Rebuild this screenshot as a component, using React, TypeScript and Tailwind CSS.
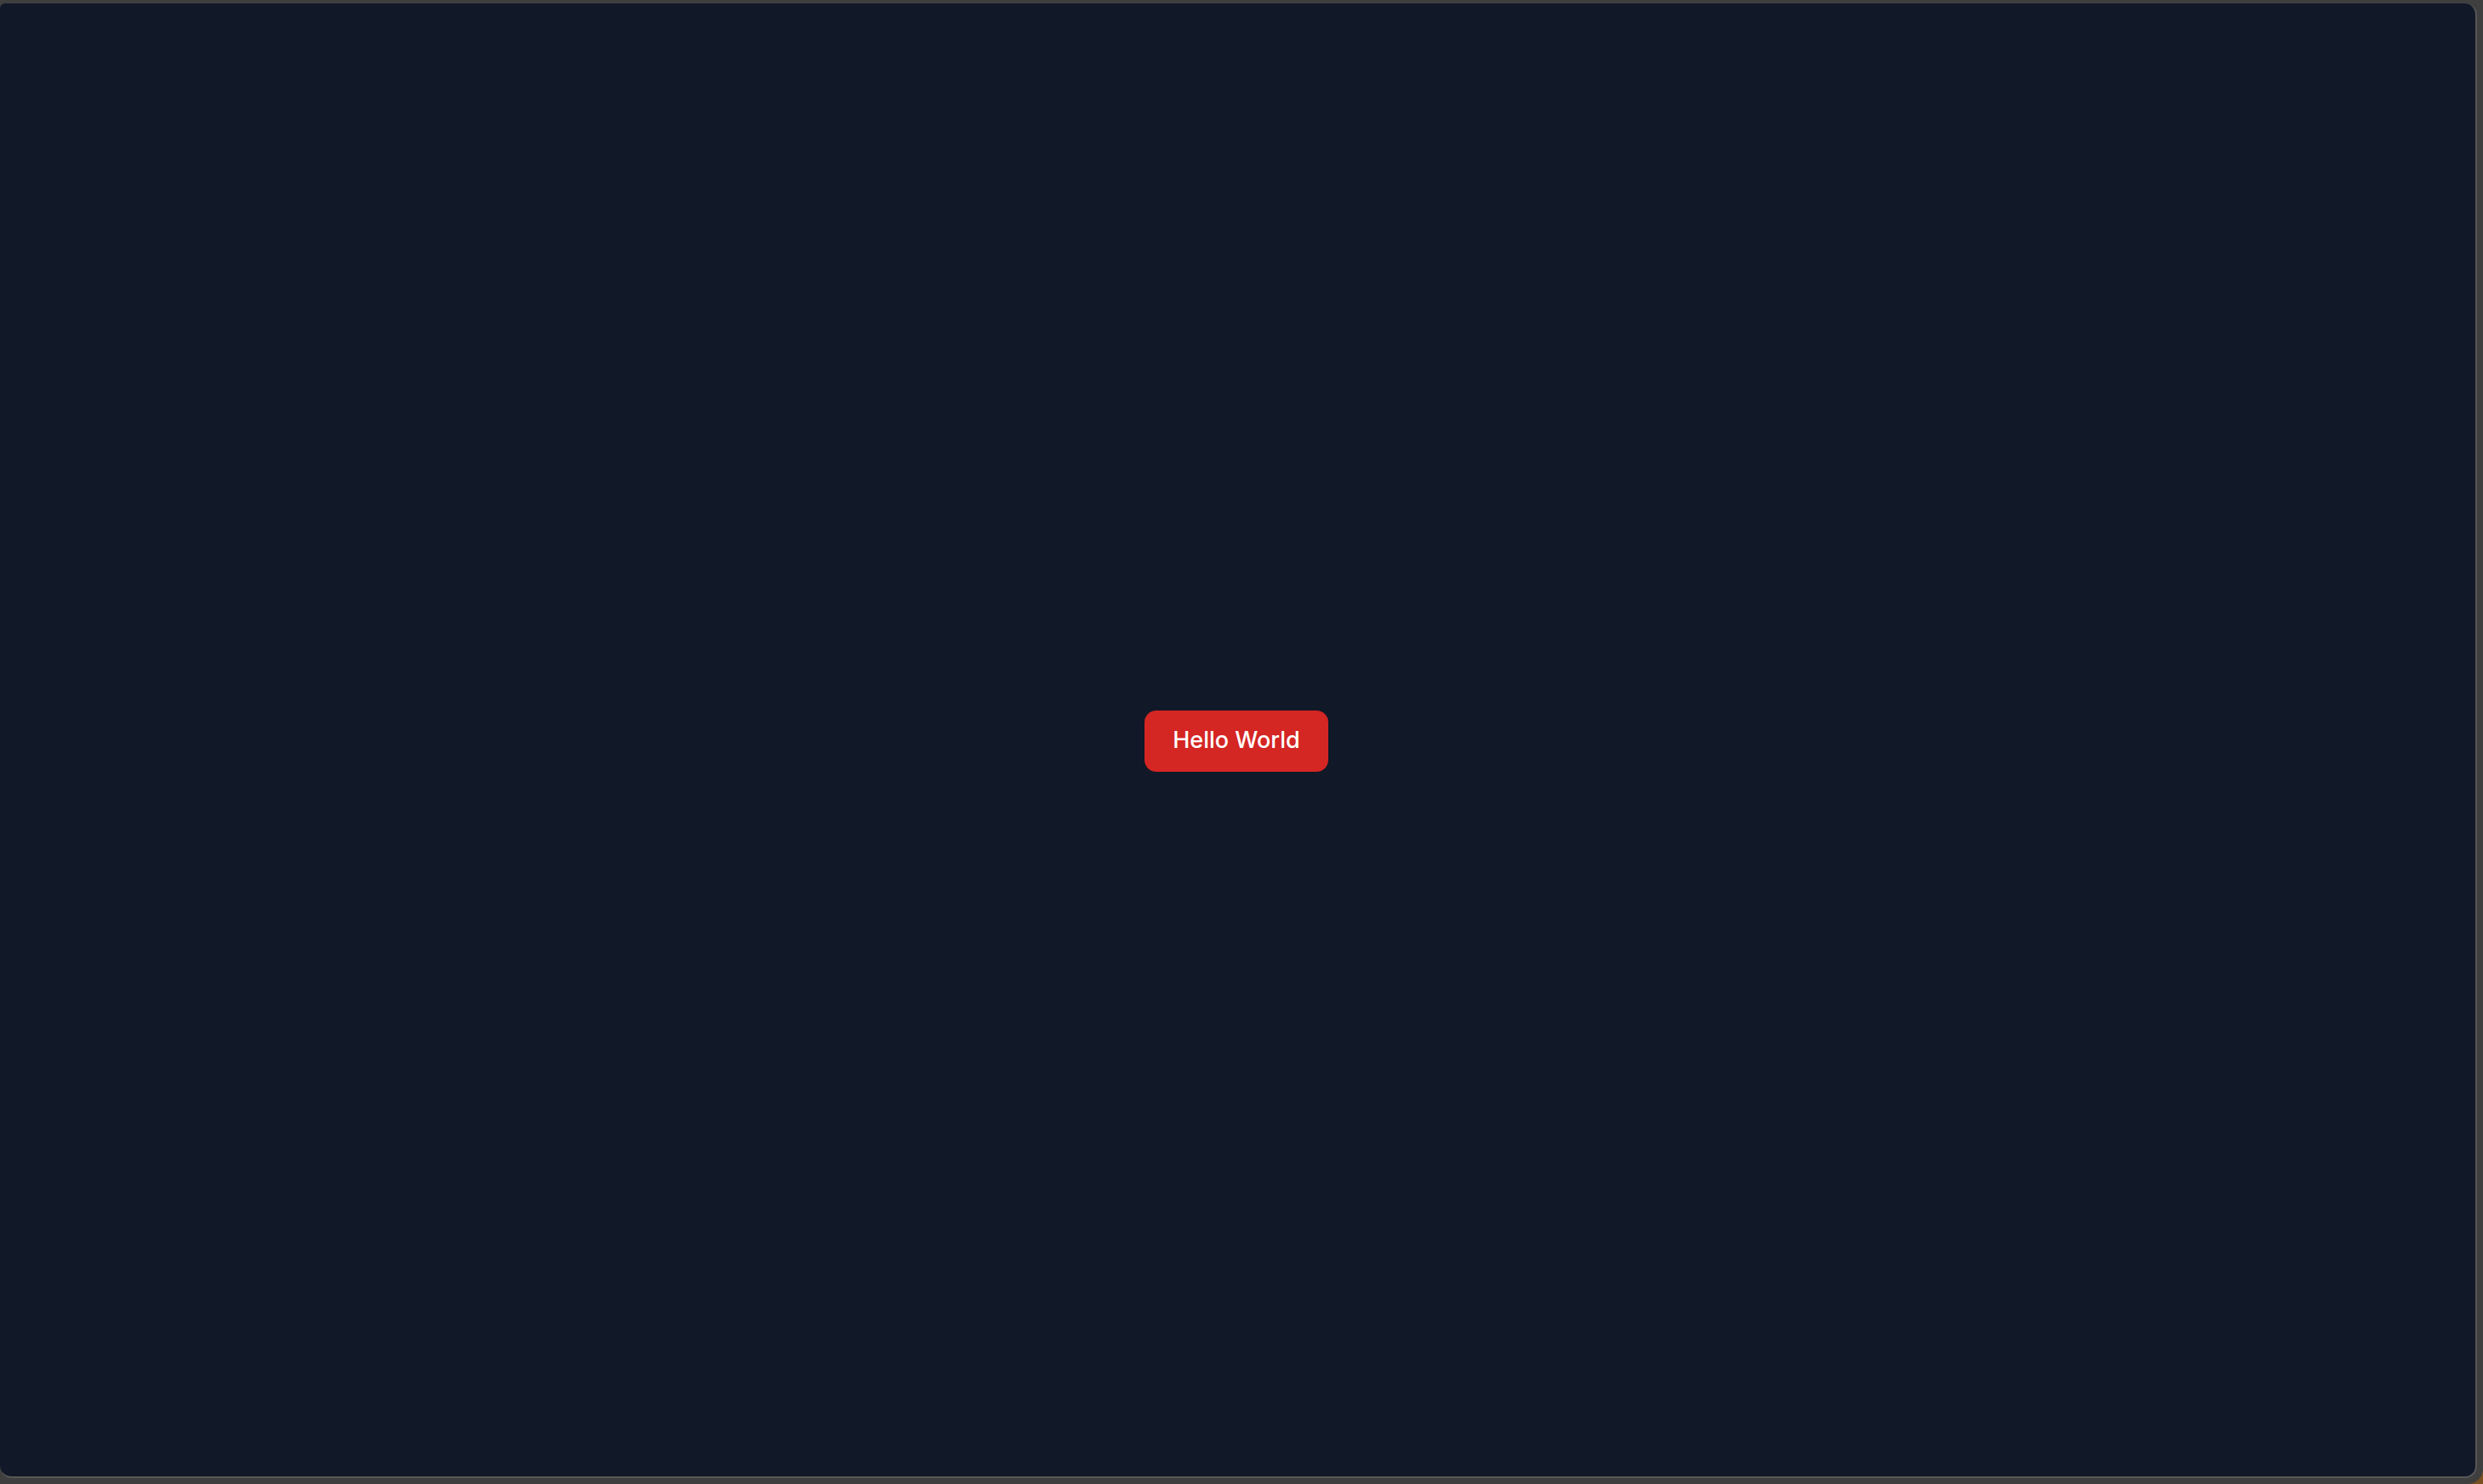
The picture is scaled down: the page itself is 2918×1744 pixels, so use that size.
export default function App() {
    return (
        <div className="h-[1744px] w-[2918px] bg-[#7a5020]">
            <div className="flex h-full w-full rounded-br-[18px] bg-[#3f3f3f] pb-[7px] pr-[7px] pt-[4px]">
                <div className="flex flex-1 items-center justify-center rounded-[14px] rounded-tl-[6px] border-b-2 border-r-2 border-[#575757] bg-[#111827] pr-[3px] pt-[2px]">
                    <button className="h-[72px] rounded-[14px] bg-[#d42623] px-[33px] font-['Inter',sans-serif] text-[27px] font-medium text-white">
                        Hello World
                    </button>
                </div>
            </div>
        </div>
    );
}
